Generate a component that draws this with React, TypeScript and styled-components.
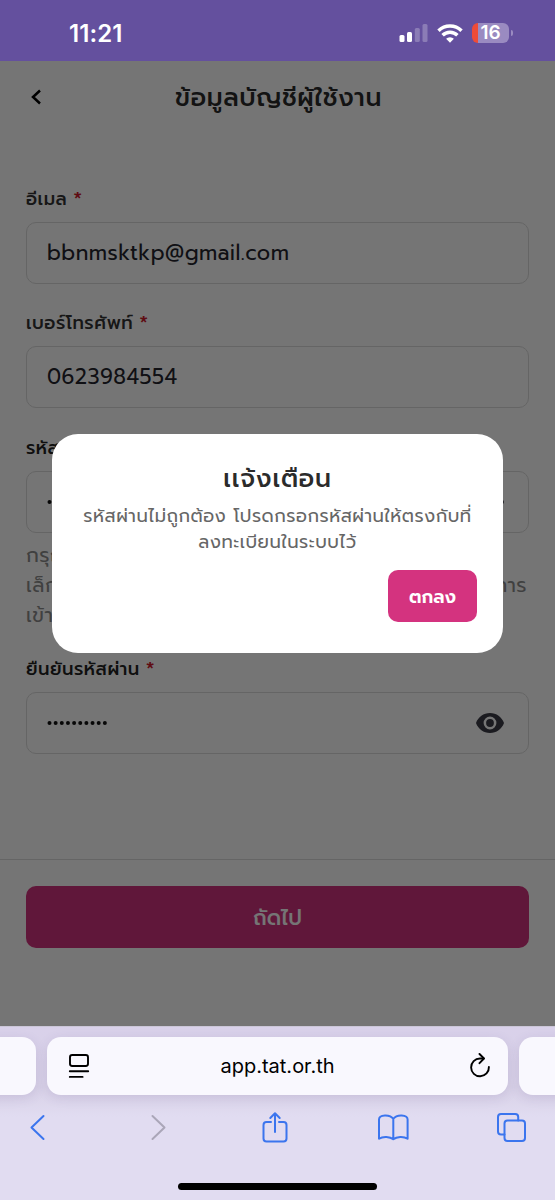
import React from "react";
import styled, { createGlobalStyle } from "styled-components";

const Global = createGlobalStyle`
  * { box-sizing: border-box; }
  body { margin: 0; background: #fff; }
  input, button { font: inherit; }
`;

const thai = `Prompt, "Noto Sans Thai", "Noto Sans", "Open Sans", "DejaVu Sans", sans-serif`;
const system = `Inter, "Liberation Sans", sans-serif`;

const Screen = styled.div`
  width: 555px;
  height: 1200px;
  display: flex;
  flex-direction: column;
  overflow: hidden;
  font-family: ${thai};
`;

const StatusBar = styled.header`
  height: 61px;
  flex: none;
  display: flex;
  align-items: center;
  justify-content: space-between;
  padding: 5px 46px 0 69px;
  background: #64509e;
  color: #fff;
  font-family: ${system};
`;

const Clock = styled.span`
  font-size: 24px;
  font-weight: 600;
  letter-spacing: 0.1px;
`;

const StatusIcons = styled.div`
  display: flex;
  align-items: center;
  gap: 9px;
`;

const Battery = styled.div`
  position: relative;
  width: 37px;
  height: 20px;
  border-radius: 6px;
  background: linear-gradient(90deg, #ee4b38 6.5px, #9a8bc1 6.5px);
  text-align: center;
  font-size: 19px;
  line-height: 20px;
  font-weight: 600;
  letter-spacing: -0.1px;
  &::after {
    content: "";
    position: absolute;
    right: -4px;
    top: 7px;
    width: 2px;
    height: 6px;
    border-radius: 0 3px 3px 0;
    background: #9a8bc1;
  }
`;

const Page = styled.main`
  position: relative;
  height: 965px;
  flex: none;
  display: flex;
  flex-direction: column;
  background: #fff;
`;

const TitleBar = styled.div`
  height: 72px;
  display: grid;
  grid-template-columns: 60px 1fr 60px;
  align-items: center;
  padding: 0 18px 0 20px;
`;

const Title = styled.h1`
  margin: 0;
  padding-top: 2px;
  text-align: center;
  font-size: 25px;
  font-weight: 500;
  letter-spacing: 0.6px;
  color: #2b2b2b;
  white-space: nowrap;
`;

const Form = styled.form`
  height: 726px;
  padding: 53px 26px 0;
`;

const Field = styled.div<{ $h: number }>`
  height: ${(p) => p.$h}px;
`;

const Label = styled.label<{ $dark?: boolean }>`
  display: flex;
  align-items: center;
  gap: 6px;
  height: 26px;
  margin-bottom: 10px;
  font-size: 18px;
  font-weight: 500;
  letter-spacing: 0.5px;
  color: ${(p) => (p.$dark ? "#222" : "#333")};
  white-space: nowrap;
`;

const Star = styled.span`
  color: #d01c2c;
  font-size: 20px;
  line-height: 26px;
  font-weight: 500;
`;

const InputBox = styled.div`
  height: 62px;
  display: flex;
  align-items: center;
  justify-content: space-between;
  padding: 0 23px 0 20px;
  border: 1.5px solid #dcdcdc;
  border-radius: 10px;
`;

const Value = styled.span`
  font-size: 21px;
  letter-spacing: 0.47px;
  color: #24242c;
`;

const Hint = styled.div`
  padding-top: 7px;
  font-size: 20px;
  line-height: 30px;
  letter-spacing: 0.4px;
  color: #8c8c8c;
`;

const HintLine = styled.div`
  display: flex;
  justify-content: space-between;
  height: 30px;
  padding-right: 2px;
  white-space: nowrap;
`;

const Footer = styled.div`
  flex: 1;
  padding: 26px 26px 0;
  border-top: 1.5px solid #dcdcdc;
`;

const NextButton = styled.button`
  display: block;
  width: 100%;
  height: 62px;
  padding: 2px 0 0;
  border: 0;
  border-radius: 10px;
  background: #d2327e;
  color: #fff;
  font-size: 21px;
  font-weight: 500;
`;

const Backdrop = styled.div`
  position: absolute;
  inset: 0;
  display: flex;
  justify-content: center;
  align-items: flex-start;
  padding-top: 373px;
  background: rgba(0, 0, 0, 0.54);
`;

const Dialog = styled.section`
  width: 451px;
  height: 219px;
  border-radius: 26px;
  background: #fff;
  display: flex;
  flex-direction: column;
  align-items: center;
  padding: 26px 26px 0;
`;

const DialogTitle = styled.h2`
  margin: 0;
  height: 43px;
  line-height: 38px;
  font-size: 25px;
  font-weight: 500;
  letter-spacing: 0.8px;
  color: #2b2b2b;
`;

const DialogText = styled.p`
  margin: 0;
  height: 67px;
  font-size: 18px;
  line-height: 26px;
  letter-spacing: 0.5px;
  text-align: center;
  color: #666;
  white-space: nowrap;
`;

const OkButton = styled.button`
  align-self: flex-end;
  width: 89px;
  height: 52px;
  padding: 2px 0 0;
  border: 0;
  border-radius: 10px;
  background: #d4337f;
  color: #fff;
  font-size: 18px;
  font-weight: 600;
`;

const Browser = styled.footer`
  flex: 1;
  display: flex;
  flex-direction: column;
  align-items: center;
  border-top: 1px solid #cbc6d8;
  background: linear-gradient(#d9d1ea, #d8d1e7 60px, #e1dcf1 90px);
  font-family: ${system};
`;

const Tabs = styled.div`
  display: flex;
  gap: 11px;
  margin-top: 10px;
`;

const Tab = styled.div`
  width: 461px;
  height: 58px;
  flex: none;
  display: flex;
  align-items: center;
  justify-content: space-between;
  padding: 0 17px 0 21px;
  border-radius: 14px;
  background: #f9f8fe;
  box-shadow: 0 3px 12px rgba(80, 60, 120, 0.13);
  font-size: 20px;
  color: #000;
`;

const Address = styled.span`
  margin-right: 4px;
`;

const Toolbar = styled.nav`
  width: 100%;
  height: 64px;
  display: flex;
  align-items: center;
  justify-content: space-between;
  padding: 0 28px 0 22px;
`;

const HomeBar = styled.div`
  width: 199px;
  height: 7px;
  margin-top: 24px;
  border-radius: 4px;
  background: #000;
`;

const Eye = () => (
  <svg width="30" height="22" viewBox="0 0 30 22">
    <path fill="#3b3b46" fillRule="evenodd" d="M15 1C8.5 1 3.2 5 1 11c2.2 6 7.5 10 14 10s11.8-4 14-10C26.8 5 21.5 1 15 1Zm0 3.6a6.4 6.4 0 1 1 0 12.8 6.4 6.4 0 0 1 0-12.8Z" />
    <circle cx="15" cy="11" r="3.9" fill="#3b3b46" />
  </svg>
);

const Signal = () => (
  <svg width="29" height="18" viewBox="0 0 29 18" fill="#fff">
    <rect x=".5" y="11" width="5" height="7" rx="1.5" />
    <rect x="8" y="8" width="5" height="10" rx="1.5" />
    <rect x="15.8" y="4" width="5" height="14" rx="1.5" opacity=".25" />
    <rect x="23.5" width="5" height="18" rx="1.5" opacity=".25" />
  </svg>
);

const Wifi = () => (
  <svg width="26" height="19" viewBox="0 0 26 19" fill="none" stroke="#fff" strokeWidth="3.5">
    <path d="M1.5 6.7a16.5 16.5 0 0 1 23 0" />
    <path d="M5.6 11.2a10.5 10.5 0 0 1 14.8 0" />
    <path d="M13 18.8l-3.9-4a5.5 5.5 0 0 1 7.8 0Z" fill="#fff" stroke="none" />
  </svg>
);

const Reader = () => (
  <svg width="22" height="26" viewBox="0 0 22 26" fill="none" stroke="#000" strokeWidth="1.9" strokeLinecap="round">
    <rect x="2" y="2" width="18" height="11" rx="2.2" />
    <path d="M1.8 18.3h18.4M1.8 23.9h12.8" />
  </svg>
);

const Reload = () => (
  <svg width="22" height="26" viewBox="0 0 22 26" fill="none" stroke="#000" strokeWidth="1.9" strokeLinecap="round" strokeLinejoin="round">
    <path d="M14.5 5.5H11A8.900 8.900 0 1 0 19.900 14" />
    <path d="M10.500 1l4.500 4.500-4.500 4.700" />
  </svg>
);

const ToolIcon = styled.svg<{ $muted?: boolean }>`
  width: 31px;
  height: 32px;
  fill: none;
  stroke: ${(p) => (p.$muted ? "#aaa6b8" : "#3b75ee")};
  stroke-width: 2;
  stroke-linecap: round;
  stroke-linejoin: round;
`;

const PasswordDots = () => (
  <svg width="62" height="6" viewBox="0 0 62 6" fill="#111">
    {Array.from({ length: 10 }, (_, i) => (
      <circle key={i} cx={2.5 + i * 6.15} cy="3" r="2" />
    ))}
  </svg>
);

export default function App() {
  return (
    <Screen>
      <Global />
      <StatusBar>
        <Clock>11:21</Clock>
        <StatusIcons>
          <Signal />
          <Wifi />
          <Battery>16</Battery>
        </StatusIcons>
      </StatusBar>

      <Page>
        <TitleBar>
          <svg width="30" height="20" viewBox="0 0 30 20" fill="none" stroke="#000" strokeWidth="2.5">
            <path d="M20 3.5L13 10l7 6.5" />
          </svg>
          <Title>ข้อมูลบัญชีผู้ใช้งาน</Title>
        </TitleBar>
        <Form>
          <Field $h={124}>
            <Label>อีเมล <Star>*</Star></Label>
            <InputBox><Value>bbnmsktkp@gmail.com</Value></InputBox>
          </Field>
          <Field $h={125}>
            <Label>เบอร์โทรศัพท์ <Star>*</Star></Label>
            <InputBox><Value>0623984554</Value></InputBox>
          </Field>
          <Field $h={221}>
            <Label $dark>รหัสผ่าน</Label>
            <InputBox><PasswordDots /><Eye /></InputBox>
            <Hint>
              <HintLine>กรุณาตั้ง</HintLine>
              <HintLine><span>เล็กและตัวเลข</span><span>การ</span></HintLine>
              <HintLine>เข้าสู่ระบบ</HintLine>
            </Hint>
          </Field>
          <Field $h={98}>
            <Label $dark>ยืนยันรหัสผ่าน <Star>*</Star></Label>
            <InputBox><PasswordDots /><Eye /></InputBox>
          </Field>
        </Form>
        <Footer>
          <NextButton>ถัดไป</NextButton>
        </Footer>
        <Backdrop>
          <Dialog>
            <DialogTitle>เเจ้งเตือน</DialogTitle>
            <DialogText>
              รหัสผ่านไม่ถูกต้อง โปรดกรอกรหัสผ่านให้ตรงกับที่<br />ลงทะเบียนในระบบไว้
            </DialogText>
            <OkButton>ตกลง</OkButton>
          </Dialog>
        </Backdrop>
      </Page>

      <Browser>
        <Tabs>
          <Tab />
          <Tab><Reader /><Address>app.tat.or.th</Address><Reload /></Tab>
          <Tab />
        </Tabs>
        <Toolbar>
          <ToolIcon viewBox="0 0 31 32"><path d="M21.5 5L9.500 16.5 21.5 28" /></ToolIcon>
          <ToolIcon viewBox="0 0 31 32" $muted><path d="M11.500 5l12 11.5L11.500 28" /></ToolIcon>
          <ToolIcon viewBox="0 0 31 32">
            <path d="M12 11H7.500a3 3 0 0 0-3 3v13.500a3 3 0 0 0 3 3h17a3 3 0 0 0 3-3V14a3 3 0 0 0-3-3H20" />
            <path d="M16 21V2.500M11.300 7L16 2.300 20.700 7" />
          </ToolIcon>
          <ToolIcon viewBox="0 0 31 32">
            <path d="M15.300 7.800v20.500C12 25.500 5 25 1 27.800V8.500C1 3.300 12 3 15.300 7.800C18.600 3 29.600 3.300 29.600 8.500v19.300c-4-2.800-11-2.300-14.300.5" />
          </ToolIcon>
          <ToolIcon viewBox="0 0 31 32">
            <path d="M8.500 23.500H5a3 3 0 0 1-3-3V6a3 3 0 0 1 3-3h14.200a3 3 0 0 1 3 3V9.500" />
            <rect x="8.500" y="9.500" width="20.500" height="20.500" rx="3" />
          </ToolIcon>
        </Toolbar>
        <HomeBar />
      </Browser>
    </Screen>
  );
}
